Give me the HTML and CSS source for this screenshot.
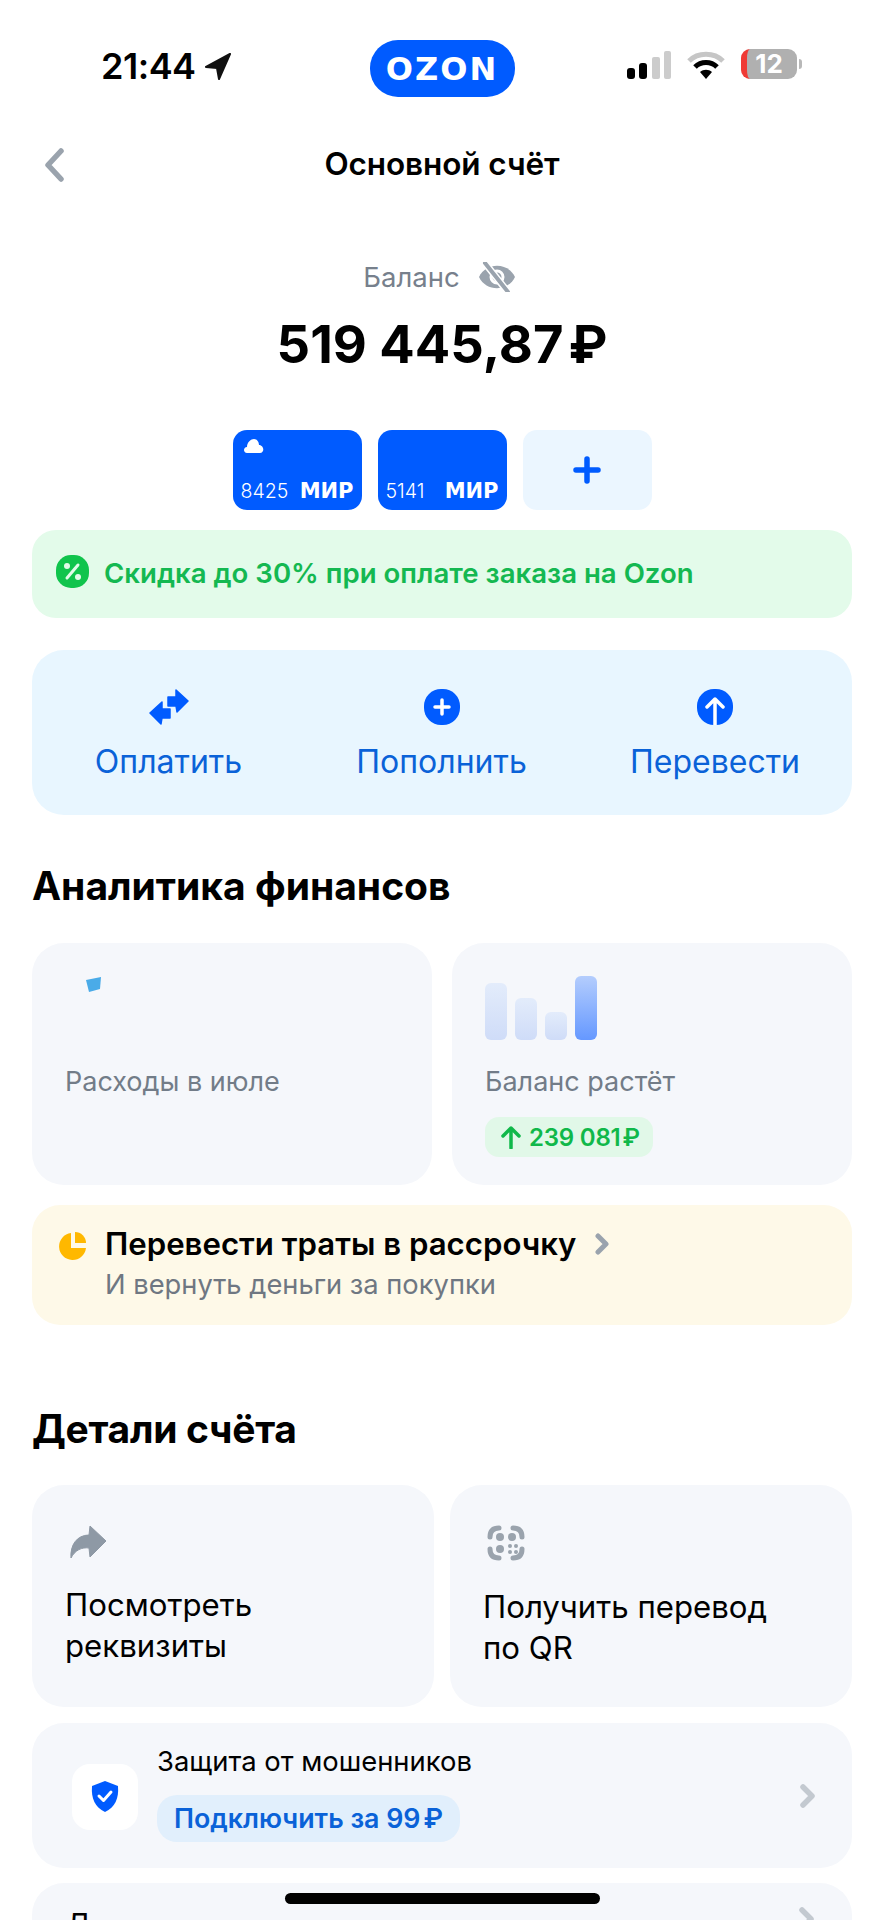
FILE: index.html
```html
<!DOCTYPE html>
<html>
<head>
    <title>Основной счёт</title>
    <link rel="stylesheet" href="styles.css">
</head>
<body>
    <div class="screen">
        <div class="status">
            <div class="status-time">
                <span>21:44</span>
                <svg width="28" height="28" viewBox="0 0 28 28"><path d="M26 2 L2 15 L13 16 L15 27 Z" fill="#111" stroke="#111" stroke-width="2" stroke-linejoin="round"/></svg>
            </div>
            <div class="logo">OZON</div>
            <div class="status-icons">
                <svg width="44" height="28" viewBox="0 0 44 28">
                    <rect x="0" y="17" width="8" height="11" rx="3" fill="#000"/>
                    <rect x="12" y="12" width="8" height="16" rx="3" fill="#000"/>
                    <rect x="25" y="6" width="8" height="22" rx="2" fill="#ccc"/>
                    <rect x="37" y="0" width="7" height="28" rx="2" fill="#ccc"/>
                </svg>
                <svg width="38" height="30" viewBox="0 0 38 30">
                    <path d="M2 11 C11 2 27 2 36 11" fill="none" stroke="#c6c6c6" stroke-width="5"/>
                    <path d="M8 17 C14 11 24 11 30 17" fill="none" stroke="#000" stroke-width="5"/>
                    <path d="M13 22 C16.500 19 21.500 19 25 22 L19 29 Z" fill="#000"/>
                </svg>
                <div class="battery">
                    <div class="battery-body">12</div>
                    <div class="battery-nib"></div>
                </div>
            </div>
        </div>

        <div class="nav">
            <svg class="nav-back" width="22" height="34" viewBox="0 0 22 34"><path d="M18 3 L5 17 L18 31" fill="none" stroke="#9aa3ad" stroke-width="5.500" stroke-linecap="round" stroke-linejoin="round"/></svg>
            <div class="nav-title">Основной счёт</div>
        </div>

        <div class="balance">
            <div class="balance-label">
                <span>Баланс</span>
                <svg width="38" height="30" viewBox="0 0 38 30">
                    <path d="M1 15 C8 0 30 0 37 15 C30 30 8 30 1 15 Z" fill="#9aa3ad"/>
                    <circle cx="19" cy="15" r="6" fill="none" stroke="#fff" stroke-width="3"/>
                    <path d="M7 1 L29 29" stroke="#fff" stroke-width="7"/>
                    <path d="M7 1 L30 30" stroke="#9aa3ad" stroke-width="4" stroke-linecap="round"/>
                </svg>
            </div>
            <div class="balance-value">519 445,87<span class="rub">₽</span></div>
        </div>

        <div class="pay-cards">
            <div class="pay-card">
                <svg class="pay-cloud" width="20" height="14" viewBox="0 0 20 14"><path d="M3 14 C-1 14 -1 8 3 8 C3 3 7 0 10 0 C13 0 15 3 15 6 C20 6 21 14 16 14 Z" fill="#fff"/></svg>
                <div class="pay-row"><span>8425</span><b>МИР</b></div>
            </div>
            <div class="pay-card">
                <div class="pay-row"><span>5141</span><b>МИР</b></div>
            </div>
            <div class="pay-add">
                <svg width="28" height="28" viewBox="0 0 28 28"><path d="M14 3 V25 M3 14 H25" stroke="#005bff" stroke-width="5.500" stroke-linecap="round"/></svg>
            </div>
        </div>

        <div class="promo">
            <svg class="promo-icon" width="33" height="33" viewBox="0 0 33 33">
                <rect width="33" height="33" rx="15" fill="#10c44c"/>
                <path d="M11 23 L22 10" stroke="#e2fbe9" stroke-width="3" stroke-linecap="round"/>
                <circle cx="11" cy="11" r="3" fill="#e2fbe9"/>
                <circle cx="22" cy="22" r="3" fill="#e2fbe9"/>
            </svg>
            <span>Скидка до 30% при оплате заказа на Ozon</span>
        </div>

        <div class="actions">
            <div class="action">
                <svg width="40" height="36" viewBox="0 0 40 36">
                    <path d="M27 1 L39 12 L28 23 L27 17 L19 17 L19 8 L27 8 Z" fill="#005bff" stroke="#005bff" stroke-width="1.500" stroke-linejoin="round"/>
                    <path d="M13 13 L1 24 L12 35 L13 29 L21 29 L21 20 L13 20 Z" fill="#005bff" stroke="#005bff" stroke-width="1.500" stroke-linejoin="round"/>
                </svg>
                <span>Оплатить</span>
            </div>
            <div class="action">
                <svg width="36" height="36" viewBox="0 0 36 36">
                    <rect width="36" height="36" rx="17" fill="#005bff"/>
                    <path d="M18 11 V25 M11 18 H25" stroke="#fff" stroke-width="3.500" stroke-linecap="round"/>
                </svg>
                <span>Пополнить</span>
            </div>
            <div class="action">
                <svg width="36" height="36" viewBox="0 0 36 36">
                    <rect width="36" height="36" rx="17" fill="#005bff"/>
                    <path d="M18 36 V10 M10 18 L18 10 L26 18" fill="none" stroke="#fff" stroke-width="3.500" stroke-linecap="round" stroke-linejoin="round"/>
                </svg>
                <span>Перевести</span>
            </div>
        </div>

        <h2 class="section-title analytics-title">Аналитика финансов</h2>

        <div class="two-cols stats">
            <div class="tile stat">
                <div class="stat-pic">
                    <svg width="18" height="18" viewBox="0 0 18 18"><path d="M1 4 L16 1 L15 13 L4 16 Z" fill="#4aabe8"/></svg>
                </div>
                <div class="stat-label">Расходы в июле</div>
            </div>
            <div class="tile stat">
                <div class="stat-pic bars">
                    <div class="bar bar-pale" style="height: 57px"></div>
                    <div class="bar bar-pale" style="height: 42px"></div>
                    <div class="bar bar-pale" style="height: 28px"></div>
                    <div class="bar bar-strong" style="height: 64px"></div>
                </div>
                <div class="stat-label">Баланс растёт</div>
                <div class="stat-pill">
                    <svg width="20" height="24" viewBox="0 0 20 24"><path d="M10 23 V3 M2 11 L10 3 L18 11" fill="none" stroke="#10b84a" stroke-width="3.500" stroke-linecap="round" stroke-linejoin="round"/></svg>
                    <span>239 081<span class="rub">₽</span></span>
                </div>
            </div>
        </div>

        <div class="installment">
            <svg class="installment-icon" width="29" height="28" viewBox="0 0 29 28">
                <path d="M13 1 A13.500 13.500 0 1 0 28 16 L13 16 Z" fill="#ffb800"/>
                <path d="M17 0 A11 11 0 0 1 28 11 L17 11 Z" fill="#ffb800"/>
            </svg>
            <div class="installment-text">
                <div class="installment-title">
                    <span>Перевести траты в рассрочку</span>
                    <svg width="16" height="24" viewBox="0 0 16 24"><path d="M3 4 L11 12 L3 20" fill="none" stroke="#9aa3ad" stroke-width="5" stroke-linecap="round" stroke-linejoin="round"/></svg>
                </div>
                <div class="installment-sub">И вернуть деньги за покупки</div>
            </div>
        </div>

        <h2 class="section-title details-title">Детали счёта</h2>

        <div class="two-cols details">
            <div class="tile detail">
                <svg width="38" height="34" viewBox="0 0 38 34"><path d="M21 1 L37 16 L21 32 L20 23 C13 22 6 25 2 33 C1 20 8 10 20 10 Z" fill="#8e99a5" stroke="#8e99a5" stroke-width="1" stroke-linejoin="round"/></svg>
                <div class="detail-text">Посмотреть<br>реквизиты</div>
            </div>
            <div class="tile detail">
                <svg width="38" height="36" viewBox="0 0 38 36">
                    <g fill="none" stroke="#9aa3ad" stroke-width="5" stroke-linecap="round">
                        <path d="M3 12 C3 6 6 3 12 3"/>
                        <path d="M26 3 C32 3 35 6 35 12"/>
                        <path d="M3 24 C3 30 6 33 12 33"/>
                        <path d="M26 33 C32 33 35 30 35 24"/>
                    </g>
                    <g fill="#9aa3ad">
                        <circle cx="13" cy="12" r="4"/>
                        <circle cx="25" cy="12" r="4"/>
                        <circle cx="13" cy="24" r="4"/>
                        <circle cx="23" cy="21" r="2"/>
                        <circle cx="29" cy="21" r="2"/>
                        <circle cx="23" cy="27" r="2"/>
                        <circle cx="29" cy="27" r="2"/>
                    </g>
                </svg>
                <div class="detail-text">Получить перевод<br>по QR</div>
            </div>
        </div>

        <div class="row-card protect">
            <div class="protect-box">
                <svg width="28" height="31" viewBox="0 0 28 31">
                    <path d="M14 0 L27 5 C28 18 24 26 14 31 C4 26 0 18 1 5 Z" fill="#005bff"/>
                    <path d="M8 15 L12.500 19.500 L20 11" fill="none" stroke="#fff" stroke-width="3" stroke-linecap="round" stroke-linejoin="round"/>
                </svg>
            </div>
            <div class="protect-text">
                <div class="protect-title">Защита от мошенников</div>
                <div class="protect-pill">Подключить за 99<span class="rub">₽</span></div>
            </div>
            <svg class="row-chevron" width="18" height="26" viewBox="0 0 18 26"><path d="M4 4 L13 13 L4 22" fill="none" stroke="#c3c9d0" stroke-width="5.500" stroke-linecap="round" stroke-linejoin="round"/></svg>
        </div>

        <div class="row-card last-row">
            <span>Д</span>
            <svg class="row-chevron" width="18" height="26" viewBox="0 0 18 26"><path d="M4 4 L13 13 L4 22" fill="none" stroke="#c3c9d0" stroke-width="5.500" stroke-linecap="round" stroke-linejoin="round"/></svg>
        </div>

        <div class="home-bar"></div>
    </div>
</body>
</html>
```

FILE: styles.css
```css
* {
    box-sizing: border-box;
}
html, body {
    margin: 0;
    padding: 0;
    background: #fff;
}
body {
    font-family: Inter, "Noto Sans", sans-serif;
    color: #000;
}
h2 {
    margin: 0;
}
.screen {
    position: relative;
    width: 884px;
    height: 1920px;
    overflow: hidden;
    padding: 40px 32px 0;
}

/* status bar */
.status {
    display: grid;
    grid-template-columns: 1fr 145px 1fr;
    height: 57px;
    margin: 0 -32px;
    padding: 0 82px;
}
.status-time {
    display: flex;
    align-items: center;
    gap: 8px;
    height: 52px;
    padding-left: 19px;
    font-size: 36px;
    font-weight: 600;
    letter-spacing: -0.5px;
}
.logo {
    display: flex;
    align-items: center;
    justify-content: center;
    background: #005bff;
    border-radius: 28px;
    color: #fff;
    font-family: "DejaVu Sans", sans-serif;
    font-size: 32px;
    font-weight: 700;
    letter-spacing: 2px;
}
.status-icons {
    display: flex;
    justify-content: flex-end;
    align-items: flex-start;
    gap: 16px;
    padding-top: 10px;
}
.status-icons svg:first-child {
    margin-top: 1px;
}
.battery {
    display: flex;
    align-items: center;
    gap: 2px;
    margin-top: -1px;
}
.battery-body {
    width: 56px;
    height: 30px;
    border-radius: 9px;
    border-left: 6px solid #ef3a35;
    background: #b0b0b0;
    color: #fff;
    font-size: 26px;
    font-weight: 700;
    line-height: 30px;
    text-align: center;
    padding-right: 6px;
}
.battery-nib {
    width: 3px;
    height: 10px;
    background: #b8b8b8;
    border-radius: 0 3px 3px 0;
}

/* nav */
.nav {
    position: relative;
    display: flex;
    justify-content: center;
    align-items: center;
    height: 48px;
    margin-top: 43px;
}
.nav-back {
    position: absolute;
    left: 11px;
    top: 8px;
}
.nav-title {
    margin-top: -2px;
    font-size: 31.500px;
    font-weight: 600;
    letter-spacing: -0.1px;
}

/* balance */
.balance {
    margin-top: 70px;
    text-align: center;
}
.balance-label {
    display: flex;
    justify-content: center;
    align-items: center;
    gap: 18px;
    height: 38px;
    padding-right: 5px;
    color: #77808c;
    font-size: 27.500px;
}
.balance-value {
    margin-top: 17px;
    height: 62px;
    line-height: 62px;
    font-size: 52.500px;
    font-weight: 700;
}
.rub {
    margin-left: 5px;
}

/* payment cards */
.pay-cards {
    display: flex;
    justify-content: center;
    gap: 16px;
    margin-top: 55px;
}
.pay-card, .pay-add {
    position: relative;
    width: 129px;
    height: 80px;
    border-radius: 14px;
}
.pay-card {
    display: flex;
    align-items: flex-end;
    background: #005bff;
    color: #fff;
    padding: 0 8px 7px;
}
.pay-cloud {
    position: absolute;
    left: 11px;
    top: 9px;
}
.pay-row {
    display: flex;
    justify-content: space-between;
    align-items: center;
    width: 100%;
    font-size: 19.500px;
    font-weight: 300;
    line-height: 24px;
}
.pay-row b {
    font-family: "DejaVu Sans", sans-serif;
    font-size: 21px;
    font-weight: 700;
}
.pay-add {
    display: flex;
    justify-content: center;
    align-items: center;
    background: #ebf6ff;
}

/* promo */
.promo {
    display: flex;
    align-items: center;
    gap: 15px;
    height: 88px;
    margin-top: 20px;
    padding: 0 0 2px 24px;
    background: #e3fbea;
    border-radius: 24px;
    color: #14b851;
    font-size: 27.600px;
    font-weight: 600;
}
.promo-icon {
    margin-top: -4px;
}

/* actions */
.actions {
    display: grid;
    grid-template-columns: 273px 273px 1fr;
    height: 165px;
    margin-top: 32px;
    padding-top: 39px;
    background: #e8f6ff;
    border-radius: 32px;
}
.action {
    display: flex;
    flex-direction: column;
    align-items: center;
    gap: 19px;
    color: #0a62d8;
    font-size: 32px;
    line-height: 36px;
}

/* sections */
.section-title {
    font-size: 39px;
    font-weight: 700;
    line-height: 44px;
}
.analytics-title {
    margin-top: 49px;
}
.details-title {
    margin-top: 82px;
    letter-spacing: -0.3px;
}
.two-cols {
    display: grid;
    grid-template-columns: 1fr 1fr;
    gap: 20px;
}
.tile {
    background: #f5f7fb;
    border-radius: 32px;
}

/* stats */
.stats {
    height: 242px;
    margin-top: 35px;
}
.stat {
    padding: 33px 33px 0;
}
.stat-pic {
    height: 64px;
    padding-left: 20px;
}
.bars {
    display: flex;
    align-items: flex-end;
    gap: 8px;
    padding-left: 0;
}
.bar {
    width: 22px;
    border-radius: 6px;
}
.bar-pale {
    background: linear-gradient(#e3ecfb, #cfdcf8);
}
.bar-strong {
    background: linear-gradient(#b4cdfd, #6598ff);
}
.stat-label {
    margin-top: 22px;
    color: #727c88;
    font-size: 27px;
    line-height: 40px;
}
.stat-pill {
    display: inline-flex;
    align-items: center;
    gap: 8px;
    height: 40px;
    margin-top: 15px;
    padding: 0 13px 0 16px;
    background: #e1f8e8;
    border-radius: 14px;
    color: #10b84a;
    font-size: 24px;
    font-weight: 600;
    letter-spacing: -0.2px;
}
.stat-pill .rub {
    margin-left: 2px;
}

/* installment */
.installment {
    display: flex;
    gap: 18px;
    height: 120px;
    margin-top: 20px;
    padding: 23px 0 0 26px;
    background: #fef9e8;
    border-radius: 28px;
}
.installment-icon {
    margin-top: 4px;
}
.installment-title {
    display: flex;
    align-items: center;
    gap: 19px;
    height: 32px;
    font-size: 31.200px;
    font-weight: 600;
}
.installment-sub {
    margin-top: 7px;
    color: #6f7782;
    font-size: 27.300px;
    line-height: 36px;
}

/* details */
.details {
    gap: 16px;
    height: 222px;
    margin-top: 34px;
}
.detail {
    padding: 40px 33px 0;
}
.detail svg {
    display: block;
    margin-left: 4px;
}
.detail-text {
    margin-top: 26px;
    font-size: 31.200px;
    line-height: 41px;
}

/* rows */
.row-card {
    display: flex;
    align-items: center;
    background: #f5f7fb;
    border-radius: 32px;
}
.row-chevron {
    margin-left: auto;
}
.protect {
    height: 145px;
    margin-top: 16px;
    padding: 0 35px 0 40px;
    gap: 19px;
}
.protect-box {
    display: flex;
    justify-content: center;
    align-items: center;
    width: 66px;
    height: 66px;
    margin-top: 2px;
    background: #fff;
    border-radius: 18px;
}
.protect-text {
    padding-bottom: 6px;
}
.protect-title {
    font-size: 27.400px;
    line-height: 36px;
}
.protect-pill {
    display: inline-block;
    height: 47px;
    margin-top: 16px;
    padding: 0 17px;
    background: #e1effc;
    border-radius: 20px;
    color: #0a62d8;
    font-size: 26.800px;
    font-weight: 600;
    line-height: 47px;
}
.protect-pill .rub {
    margin-left: 3px;
}
.last-row {
    align-items: flex-start;
    height: 145px;
    margin-top: 15px;
    padding: 23px 36px 0 34px;
    font-size: 30px;
    line-height: 36px;
}

.home-bar {
    position: absolute;
    left: 285px;
    top: 1893px;
    width: 315px;
    height: 11px;
    background: #000;
    border-radius: 6px;
}
```
